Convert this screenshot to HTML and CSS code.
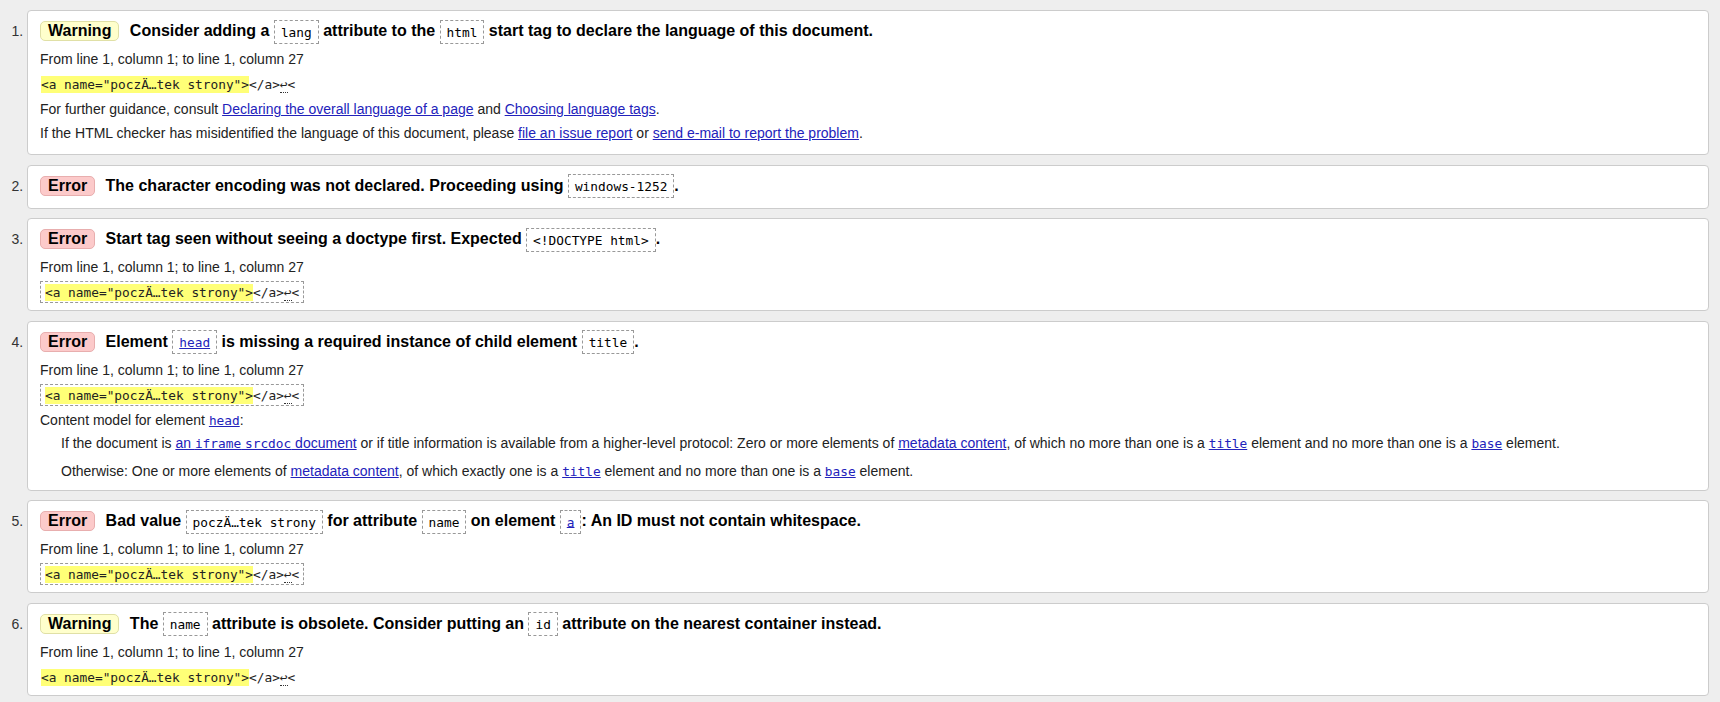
FILE: index.html
```html
<!DOCTYPE html>
<html lang="en">
<head>
<meta charset="utf-8">
<title>Validator messages</title>
<link rel="stylesheet" href="styles.css">
</head>
<body>
<ol class="messages">
  <li class="msg">
    <p class="title"><span class="badge warning">Warning</span> Consider adding a <code class="cb">lang</code> attribute to the <code class="cb">html</code> start tag to declare the language of this document.</p>
    <p class="loc">From line 1, column 1; to line 1, column 27</p>
    <p class="extract"><code><mark>&lt;a name="poczÄ…tek strony"&gt;</mark>&lt;/a&gt;<span class="lf">↩</span>&lt;</code></p>
    <p class="note">For further guidance, consult <a href="#">Declaring the overall language of a page</a> and <a href="#">Choosing language tags</a>.</p>
    <p class="note">If the HTML checker has misidentified the language of this document, please <a href="#">file an issue report</a> or <a href="#">send e-mail to report the problem</a>.</p>
  </li>
  <li class="msg">
    <p class="title"><span class="badge error">Error</span> The character encoding was not declared. Proceeding using <code class="cb">windows-1252</code>.</p>
  </li>
  <li class="msg">
    <p class="title"><span class="badge error">Error</span> Start tag seen without seeing a doctype first. Expected <code class="cb">&lt;!DOCTYPE html&gt;</code>.</p>
    <p class="loc">From line 1, column 1; to line 1, column 27</p>
    <p class="extract boxed"><code><mark>&lt;a name="poczÄ…tek strony"&gt;</mark>&lt;/a&gt;<span class="lf">↩</span>&lt;</code></p>
  </li>
  <li class="msg">
    <p class="title"><span class="badge error">Error</span> Element <code class="cb"><a href="#">head</a></code> is missing a required instance of child element <code class="cb">title</code>.</p>
    <p class="loc">From line 1, column 1; to line 1, column 27</p>
    <p class="extract boxed"><code><mark>&lt;a name="poczÄ…tek strony"&gt;</mark>&lt;/a&gt;<span class="lf">↩</span>&lt;</code></p>
    <p class="note">Content model for element <a href="#"><code>head</code></a>:</p>
    <div class="cm">
      <p class="cm-item">If the document is <a href="#">an <code>iframe</code> <code>srcdoc</code> document</a> or if title information is available from a higher-level protocol: Zero or more elements of <a href="#">metadata content</a>, of which no more than one is a <a href="#"><code>title</code></a> element and no more than one is a <a href="#"><code>base</code></a> element.</p>
      <p class="cm-item">Otherwise: One or more elements of <a href="#">metadata content</a>, of which exactly one is a <a href="#"><code>title</code></a> element and no more than one is a <a href="#"><code>base</code></a> element.</p>
    </div>
  </li>
  <li class="msg">
    <p class="title"><span class="badge error">Error</span> Bad value <code class="cb">poczÄ…tek strony</code> for attribute <code class="cb">name</code> on element <code class="cb"><a href="#">a</a></code>: An ID must not contain whitespace.</p>
    <p class="loc">From line 1, column 1; to line 1, column 27</p>
    <p class="extract boxed"><code><mark>&lt;a name="poczÄ…tek strony"&gt;</mark>&lt;/a&gt;<span class="lf">↩</span>&lt;</code></p>
  </li>
  <li class="msg">
    <p class="title"><span class="badge warning">Warning</span> The <code class="cb">name</code> attribute is obsolete. Consider putting an <code class="cb">id</code> attribute on the nearest container instead.</p>
    <p class="loc">From line 1, column 1; to line 1, column 27</p>
    <p class="extract"><code><mark>&lt;a name="poczÄ…tek strony"&gt;</mark>&lt;/a&gt;<span class="lf">↩</span>&lt;</code></p>
  </li>
</ol>
</body>
</html>
```

FILE: styles.css
```css
* { box-sizing: border-box; }
html { background: #eeeeee; }
body {
  margin: 0;
  background: #eeeeee;
  font-family: "Liberation Sans", Arial, sans-serif;
  font-size: 14px;
  color: #222;
}
.messages {
  list-style: decimal outside;
  margin: 10px 11px 0 0;
  padding: 0 0 0 27px;
}
.msg {
  background: #fff;
  border: 1px solid #ccc;
  border-radius: 4px;
  padding: 9px 12px 7px 12px;
  margin: 0 0 9.6px;
}
.msg::marker { color: #333; font-size: 14px; }
p { margin: 0; }
.title {
  margin: 0 0 4px;
  font-size: 16px;
  font-weight: bold;
  line-height: 22px;
  color: #000;
}
.badge {
  display: inline-block;
  padding: 0 7px;
  border: 1px solid;
  border-radius: 5px;
  line-height: 18px;
  margin-right: 6px;
  font-weight: bold;
}
.badge.warning { background: #ffffcc; border-color: #e0e0a6; }
.badge.error { background: #fccaca; border-color: #e8aeae; }
code {
  font-family: "DejaVu Sans Mono", monospace;
  font-size: 12.8px;
  line-height: 1;
}
.title .cb {
  font-weight: normal;
  border: 1px dashed #999;
  padding: 3.5px 6px;
}
.loc { margin: 8px 0 0; line-height: 18px; }
.extract {
  margin: 5px 0 0;
  width: fit-content;
  border: 1px dashed transparent;
  line-height: 20px;
}
.extract.boxed { border-color: #999; padding: 0 4px; }
mark { background: #ffff77; color: inherit; padding: 1px 0; }
.lf { border-bottom: 1px dotted #333; }
.note { margin: 5px 0 4px; line-height: 19px; }
.cm-item { margin: 4px 0 2px 21px; line-height: 19px; }
.cm-item + .cm-item { margin-top: 9px; }
a { color: #2222bb; text-decoration: underline; }
```
